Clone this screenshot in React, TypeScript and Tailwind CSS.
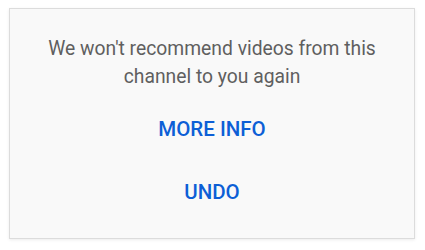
export default function App() {
  return (
    <div className="w-[425px] h-[250px] bg-white pt-[8px] pl-[9px]" style={{ fontFamily: 'Roboto, "Liberation Sans", sans-serif' }}>
      <div className="w-[406px] h-[231px] bg-[#f9f9f9] border border-[#dcdcdc] shadow-[0_1px_3px_rgba(0,0,0,0.08)] flex flex-col items-center pt-[26px]">
        <p className="text-[19.3px] leading-[28px] text-[#5f5f5f] text-center">
          We won't recommend videos from this
          <br />
          channel to you again
        </p>
        <button className="mt-[24px] text-[20.5px] leading-[28px] font-medium text-[#0d5fd6]">MORE INFO</button>
        <button className="mt-[35px] text-[20.5px] leading-[28px] font-medium text-[#0d5fd6]">UNDO</button>
      </div>
    </div>
  );
}
